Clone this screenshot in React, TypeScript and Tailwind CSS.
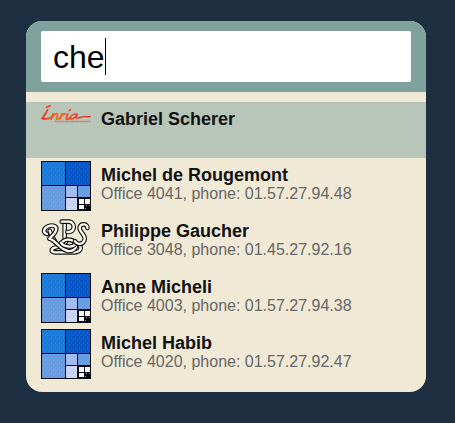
import { useState } from "react";

type LogoKind = "inria" | "fractal" | "pps";

interface Person {
  name: string;
  details?: string;
  logo: LogoKind;
}

const people: Person[] = [
  { name: "Gabriel Scherer", logo: "inria" },
  { name: "Michel de Rougemont", details: "Office 4041, phone: 01.57.27.94.48", logo: "fractal" },
  { name: "Philippe Gaucher", details: "Office 3048, phone: 01.45.27.92.16", logo: "pps" },
  { name: "Anne Micheli", details: "Office 4003, phone: 01.57.27.94.38", logo: "fractal" },
  { name: "Michel Habib", details: "Office 4020, phone: 01.57.27.92.47", logo: "fractal" },
];

function InriaLogo() {
  return (
    <svg viewBox="33 30 150 54" className="w-full" fill="none" strokeLinecap="round" strokeLinejoin="round" aria-hidden="true">
      <defs>
        <linearGradient id="inria-ink" gradientUnits="userSpaceOnUse" x1="33" y1="0" x2="183" y2="0">
          <stop offset="0" stopColor="#e8281f" />
          <stop offset="0.35" stopColor="#f8701a" />
          <stop offset="0.6" stopColor="#f23a20" />
          <stop offset="1" stopColor="#e42420" />
        </linearGradient>
      </defs>
      <g stroke="url(#inria-ink)" strokeWidth="5">
        <path d="M50 37 L61 32" />
        <path d="M53 45 C48 52 42 66 36 70 C46 73 56 71 62 67" />
        <path d="M69 56 L63 73 M65 69 C71 59 80 53 83 57 C84 61 76 72 81 73 C84 73 87 70 89 67" />
        <path d="M96 56 L89 73 M91 68 C96 59 102 55 107 57" />
        <path d="M114 57 C110 64 106 72 111 73 C115 73 119 69 121 66 M118 47 L121 44" />
        <path d="M142 58 C134 54 121 62 121 69 C123 77 137 68 142 58 C137 66 136 71 144 69 C156 65 168 64 180 65" strokeWidth="4" />
      </g>
      <path d="M75 79.5 H182" stroke="#e0563f" strokeOpacity="0.7" strokeWidth="4" strokeDasharray="4 1" strokeLinecap="butt" />
    </svg>
  );
}

function FractalLogo() {
  return (
    <svg viewBox="0 0 50 50" className="w-full" shapeRendering="crispEdges" aria-hidden="true">
      <defs>
        <pattern id="grain" width="4" height="5" patternUnits="userSpaceOnUse">
          <path d="M0 0h1v2H0zM2 3h1v2H2z" fill="#ffffff" fillOpacity="0.06" />
          <path d="M1 2h1v2H1zM3 4h1v1H3z" fill="#00307a" fillOpacity="0.07" />
        </pattern>
      </defs>
      <rect width="50" height="50" fill="#05070c" />
      <rect x="1" y="1" width="23" height="23" fill="#1c7ad8" />
      <rect x="25" y="1" width="24" height="23" fill="#0758c8" />
      <rect x="1" y="25" width="23" height="24" fill="#6a9de0" />
      <rect x="25" y="25" width="11" height="11" fill="#a2bcef" />
      <rect x="37" y="25" width="12" height="11" fill="#679de3" />
      <rect x="25" y="37" width="11" height="12" fill="#ccd5f8" />
      <rect x="1" y="1" width="48" height="23" fill="url(#grain)" />
      <rect x="1" y="25" width="35" height="24" fill="url(#grain)" />
      <path d="M38 38h5v5h-5zM44 38h5v5h-5zM38 44h5v4h-5z" fill="#ffffff" />
      <path d="M45 44h1v1h-1zM48 44h1v1h-1zM44 47h1v1h-1z" fill="#9a9a9a" />
    </svg>
  );
}

const knot = [
  "M134 100 C142 112 132 121 118 121 L60 121 C46 120 48 110 60 107 C76 103 88 100 94 88",
  "M44 56 C48 70 54 76 62 92",
  "M36 66 C23 62 25 49 39 43 C55 37 67 43 63 55 C59 68 49 73 43 80 C58 82 76 112 98 117 C116 120 124 108 124 97",
  "M89 34 L89 82",
  "M80 29 H102 C121 31 121 58 102 60 H97",
  "M84 88 C96 78 119 84 120 95 C118 106 88 108 78 92",
  "M157 48 C159 36 138 32 134 46 C132 60 152 68 149 82 C145 98 128 100 120 88",
];

function PpsLogo() {
  return (
    <svg viewBox="18 15 150 150" className="w-full" fill="none" strokeLinecap="round" strokeLinejoin="round" aria-hidden="true">
      {knot.map((d) => (
        <g key={d}>
          <path d={d} stroke="#15140f" strokeWidth="14" />
          <path d={d} stroke="#fdfcf7" strokeWidth="7" />
        </g>
      ))}
    </svg>
  );
}

const logos = { inria: InriaLogo, fractal: FractalLogo, pps: PpsLogo };

function Result({ person, selected, onSelect }: { person: Person; selected: boolean; onSelect: () => void }) {
  const Logo = logos[person.logo];
  return (
    <li>
      <button
        type="button"
        aria-pressed={selected}
        onClick={onSelect}
        className={`flex h-14 w-full items-start gap-2.5 px-[15px] py-[3px] text-left ${selected ? "bg-[#b8c6ba]" : ""}`}
      >
        <span className="w-[50px] shrink-0">
          <Logo />
        </span>
        <span className="min-w-0 pt-1">
          <span className="block text-lg leading-5 font-bold text-[#111111]">{person.name}</span>
          {person.details && <span className="block text-base leading-[18px] text-[#666666]">{person.details}</span>}
        </span>
      </button>
    </li>
  );
}

export default function App() {
  const [query, setQuery] = useState("che");
  const [selected, setSelected] = useState(0);
  const results = people.filter((p) => p.name.toLowerCase().includes(query.toLowerCase()));

  return (
    <main className="min-h-screen bg-[#1f2f42] pt-[21px] pr-[29px] pb-[31px] pl-[26px] font-['Liberation_Sans',Arial,sans-serif]">
      <section className="mx-auto max-w-[400px] overflow-hidden rounded-2xl bg-[#efe9d6]">
        <div className="bg-[#80a29c] px-[15px] py-2.5">
          <div className="relative">
            <input
              type="text"
              aria-label="Search people"
              value={query}
              onChange={(e) => setQuery(e.target.value)}
              className="block h-[51px] w-full rounded-xs bg-white px-3 pt-0.5 text-[32px] text-black caret-transparent outline-none"
            />
            <div aria-hidden="true" className="pointer-events-none absolute inset-0 flex items-center px-3 text-[32px]">
              <span className="h-[37px] border-r border-black leading-[37px] whitespace-pre text-transparent">{query}</span>
            </div>
          </div>
        </div>
        <ul className="py-2.5">
          {results.map((person, i) => (
            <Result key={person.name} person={person} selected={i === selected} onSelect={() => setSelected(i)} />
          ))}
        </ul>
      </section>
    </main>
  );
}
